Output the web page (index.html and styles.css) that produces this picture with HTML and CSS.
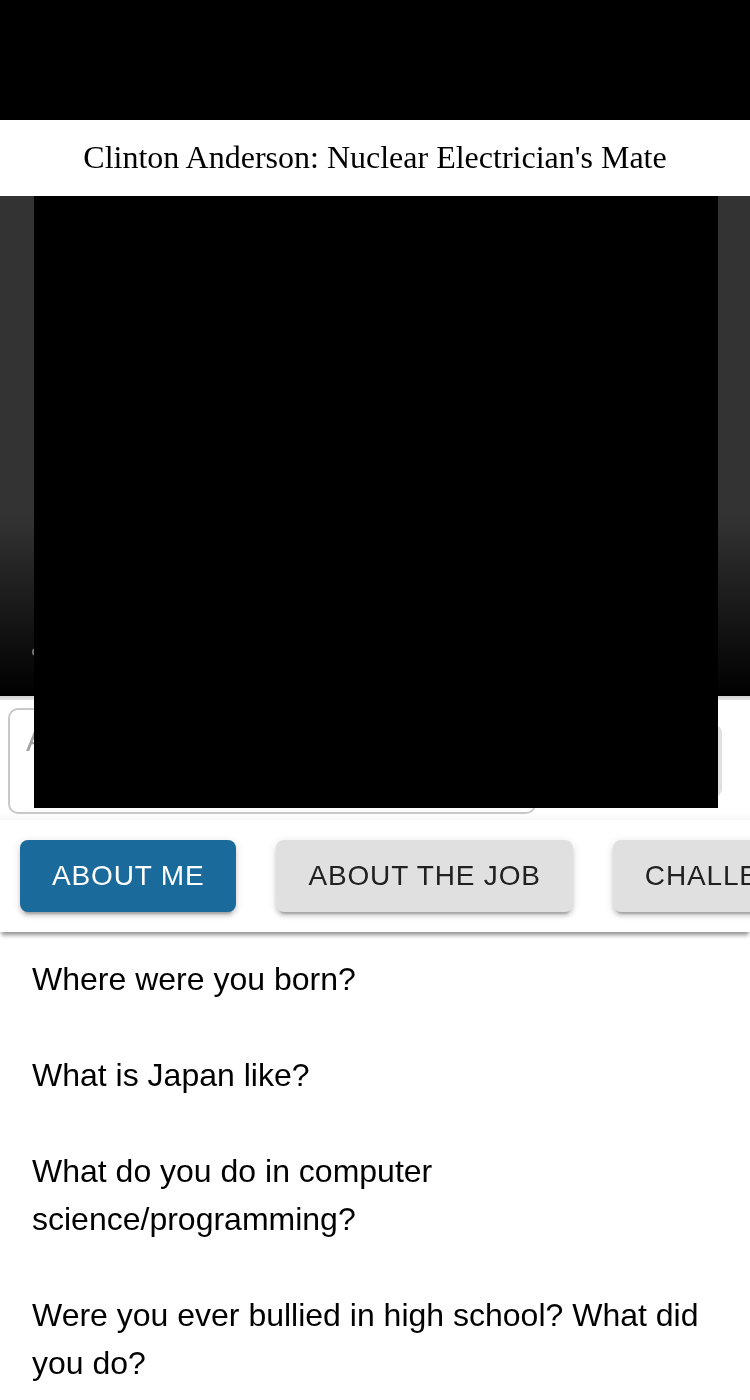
FILE: index.html
```
<!DOCTYPE html>
<html lang="en">
<head>
<meta charset="utf-8">
<meta name="viewport" content="width=device-width, initial-scale=1">
<title>Clinton Anderson: Nuclear Electrician's Mate</title>
<link rel="stylesheet" href="styles.css">
</head>
<body>
<div class="top-bar"></div>
<header class="header">
  <h1 class="title">Clinton Anderson: Nuclear Electrician's Mate</h1>
</header>
<main>
  <div class="stage">
    <div class="player">
      <div class="controls"><span class="dot"></span></div>
    </div>
    <form class="ask">
      <textarea class="question" aria-label="Ask a question" placeholder="Ask a question"></textarea>
      <button class="button send" type="button">Send</button>
    </form>
    <div class="cover"></div>
  </div>
  <nav class="topics" aria-label="Topics">
    <button class="button active" type="button">About Me</button>
    <button class="button" type="button">About the Job</button>
    <button class="button" type="button">Challenges</button>
  </nav>
  <ul class="questions">
    <li>Where were you born?</li>
    <li>What is Japan like?</li>
    <li>What do you do in computer science/programming?</li>
    <li>Were you ever bullied in high school? What did you do?</li>
  </ul>
</main>
</body>
</html>
```
FILE: styles.css
```
* {
  box-sizing: border-box;
}

body {
  margin: 0;
  background: #fff;
  color: #000;
  font-family: "Liberation Sans", Arial, sans-serif;
}

.top-bar {
  height: 120px;
  background: #000;
}

.header {
  padding: 19px 20px 21px;
  text-align: center;
}

.title {
  margin: 0;
  font: 400 32px/36px "Liberation Serif", "Times New Roman", serif;
}

.stage {
  position: relative;
}

.player {
  display: flex;
  align-items: flex-end;
  height: 500px;
  background: linear-gradient(#333 0, #333 64%, #000 100%);
}

.controls {
  padding: 0 32px 40px;
}

.dot {
  display: block;
  width: 8px;
  height: 8px;
  border-radius: 50%;
  background: #777;
}

.ask {
  display: flex;
  align-items: center;
  justify-content: space-between;
  padding: 12px 28px 6px 8px;
  background: linear-gradient(#d0d0d0, #e4e4e4) top / 100% 4px no-repeat,
    linear-gradient(#fff, #f8f8f8) bottom / 100% 8px no-repeat;
}

.question {
  width: 528px;
  height: 106px;
  padding: 12px 16px;
  border: 2px solid #c8c8c8;
  border-radius: 10px;
  background: #fff;
  font: 32px/36px "Liberation Sans", Arial, sans-serif;
  resize: none;
}

.question::placeholder {
  color: #a2a2a2;
}

.button {
  flex: none;
  height: 72px;
  padding: 0 32px;
  border: 0;
  border-radius: 8px;
  background: #e0e0e0;
  box-shadow: 0 6px 2px -4px rgba(0, 0, 0, .2), 0 4px 4px rgba(0, 0, 0, .14), 0 2px 10px rgba(0, 0, 0, .12);
  color: #212121;
  font: 28px/48px "Liberation Sans", Arial, sans-serif;
  letter-spacing: 0.03em;
  text-transform: uppercase;
}

.active {
  background: #1b6a9c;
  color: #fff;
}

.send {
  box-shadow: none;
  color: #a6a6a6;
}

.cover {
  position: absolute;
  inset: 0 32px 12px 34px;
  background: #000;
}

.topics {
  display: flex;
  gap: 40px;
  padding: 20px;
  overflow-x: auto;
  scrollbar-width: none;
  background: #fff;
  box-shadow: 0 6px 4px -2px rgba(0, 0, 0, .2), 0 3px 4px -1px rgba(0, 0, 0, .3);
}

.questions {
  margin: 0;
  padding: 23px 32px;
  list-style: none;
  font-size: 32px;
  line-height: 48px;
}

.questions li + li {
  margin-top: 48px;
}
```
